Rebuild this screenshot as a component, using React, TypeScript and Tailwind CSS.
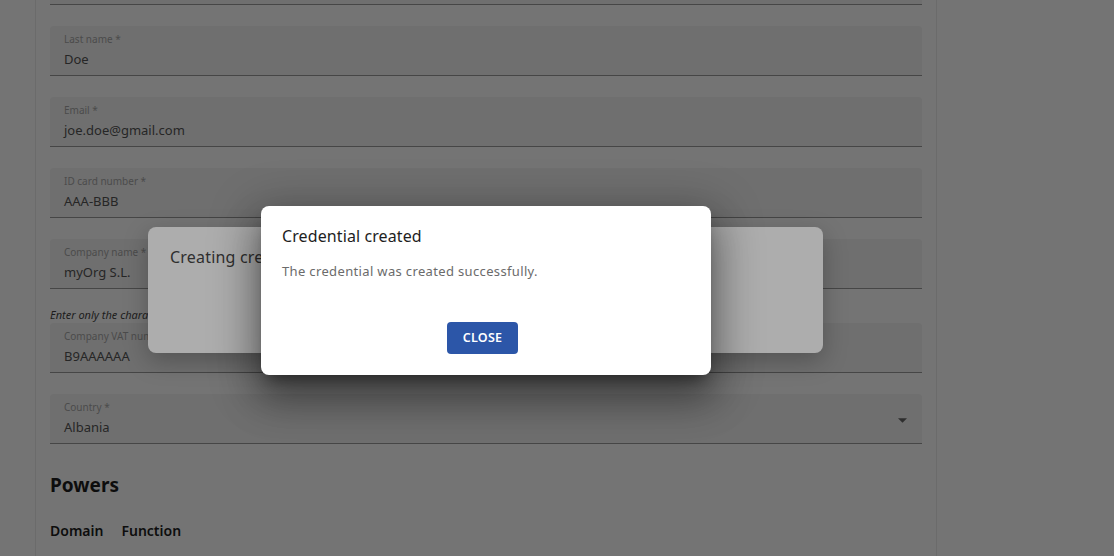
import React from "react";

function Field({ label, value, select }: { label?: string; value?: string; select?: boolean }) {
  return (
    <div className="relative h-[50px] rounded-t-[4px] bg-[#6f6f6f] border-b border-[#464646] px-[14px] pt-[7px]">
      {label && <div className="text-[10px] leading-[12px] text-[#4b4b4b]">{label}</div>}
      {value && <div className="mt-[6px] text-[13px] leading-[16px] text-[#262626]">{value}</div>}
      {select && (
        <svg className="absolute right-[15px] top-[24px]" width="9" height="5" viewBox="0 0 10 5">
          <path d="M0 0 L10 0 L5 5 Z" fill="#2e2e2e" />
        </svg>
      )}
    </div>
  );
}

export default function App() {
  return (
    <div className="relative w-[1114px] h-[556px] overflow-hidden bg-[#747474] font-['Noto_Sans',sans-serif]">
      <div className="flex h-full">
        <div className="w-[36px] border-r border-[#6b6b6b]" />
        <div className="w-[901px] border-r border-[#6b6b6b] px-[14px] flex flex-col">
          <div className="mt-[-45px] flex flex-col gap-[21px]">
            <Field />
            <Field label="Last name *" value="Doe" />
            <Field label="Email *" value="joe.doe@gmail.com" />
            <Field label="ID card number *" value="AAA-BBB" />
            <Field label="Company name *" value="myOrg S.L." />
          </div>
          <div className="h-[34px] pt-[19px] text-[11px] leading-[14px] italic text-[#1c1c1c]">
            Enter only the characters of the VAT number, without the country prefix
          </div>
          <div className="flex flex-col gap-[21px]">
            <Field label="Company VAT number *" value="B9AAAAAA" />
            <Field label="Country *" value="Albania" select />
          </div>
          <div className="mt-[29px] text-[19px] leading-[24px] font-bold text-[#0d0d0d]">Powers</div>
          <div className="mt-[24px] flex gap-[18px] text-[14px] leading-[20px] font-semibold text-[#0d0d0d]">
            <span>Domain</span>
            <span>Function</span>
          </div>
        </div>
        <div className="flex-1" />
      </div>

      <div className="absolute left-[148px] top-[227px] w-[675px] h-[126px] rounded-[8px] bg-[#adadad] px-[22px] pt-[19px] shadow-[0_8px_24px_rgba(0,0,0,0.25)]">
        <div className="text-[16px] leading-[22px] tracking-[0.2px] text-[#2f2f2f]">Creating credential...</div>
      </div>

      <div className="absolute left-[261px] top-[206px] w-[450px] h-[169px] rounded-[8px] bg-white shadow-[0_11px_15px_-7px_rgba(0,0,0,0.4),0_24px_38px_3px_rgba(0,0,0,0.28),0_9px_46px_8px_rgba(0,0,0,0.25)] flex flex-col">
        <div className="px-[21px] pt-[19px] text-[16px] leading-[22px] tracking-[0.1px] text-[#1e1e1e]">Credential created</div>
        <div className="px-[21px] mt-[15px] text-[13px] leading-[18px] tracking-[0.35px] text-[#6b6b6b]">
          The credential was created successfully.
        </div>
        <div className="mt-auto mb-[21px] flex justify-center">
          <button className="ml-[-7px] w-[71px] h-[32px] rounded-[4px] bg-[#2c56a8] text-white text-[12.5px] font-semibold tracking-[0.3px] flex items-center justify-center">
            CLOSE
          </button>
        </div>
      </div>
    </div>
  );
}
